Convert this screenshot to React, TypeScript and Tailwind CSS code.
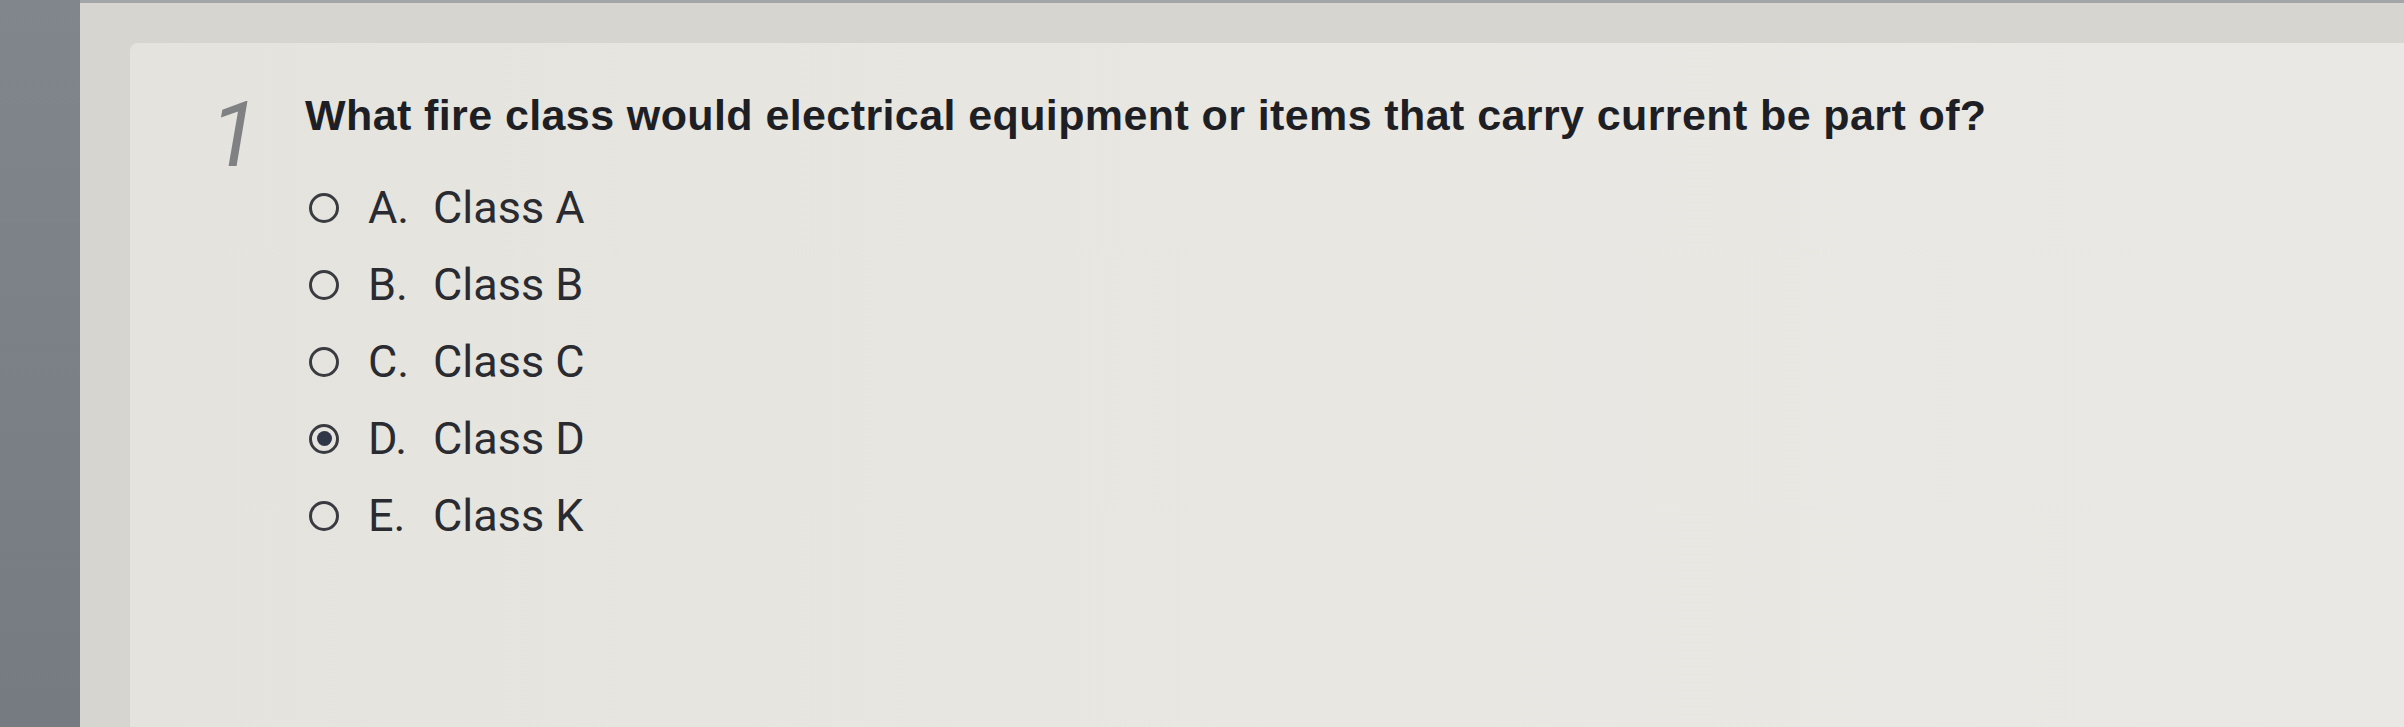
import React from "react";

const options = [
  { key: "A.", text: "Class A", selected: false },
  { key: "B.", text: "Class B", selected: false },
  { key: "C.", text: "Class C", selected: false },
  { key: "D.", text: "Class D", selected: true },
  { key: "E.", text: "Class K", selected: false },
];

function Radio({ selected }: { selected: boolean }) {
  return (
    <span className="flex h-[30px] w-[30px] shrink-0 items-center justify-center rounded-full border-[3px] border-[#3a3b40]">
      {selected && <span className="h-[15px] w-[15px] rounded-full bg-[#2f3648]" />}
    </span>
  );
}

export default function App() {
  return (
    <div
      className="flex h-[727px] w-full overflow-hidden bg-[#7b8186]"
      style={{ fontFamily: "Roboto, 'Liberation Sans', Arial, sans-serif" }}
    >
      <div className="w-[80px] shrink-0 bg-gradient-to-b from-[#80868b] to-[#757b80]" />
      <div className="flex flex-1 flex-col border-t-[3px] border-[#a3a6a8] bg-[#d6d5d0]">
        <div className="flex flex-1 pl-[50px] pt-[40px]">
          <div className="flex-1 rounded-tl-[8px] bg-gradient-to-r from-[#e4e3de] via-[#e8e7e2] to-[#e9e8e4] pl-[80px] pt-[45px]">
            <div className="flex">
              <div className="w-[95px] shrink-0 pt-[3px] text-[90px] font-normal italic leading-[90px] text-[#808183]">
                1
              </div>
              <div className="flex flex-col pt-[6px]">
                <div
                  className="text-[43px] font-bold leading-[42px] tracking-[0.4px] text-[#1e1f25]"
                  style={{ fontFamily: "'Liberation Sans', Arial, sans-serif" }}
                >
                  What fire class would electrical equipment or items that carry current be part of?
                </div>
                <div className="mt-[33px] flex flex-col">
                  {options.map((o) => (
                    <div key={o.key} className="flex h-[77px] items-center pl-[4px]">
                      <Radio selected={o.selected} />
                      <span className="ml-[29px] w-[65px] text-[45px] leading-[77px] text-[#2a2b31]">
                        {o.key}
                      </span>
                      <span className="text-[45px] leading-[77px] text-[#2a2b31]">{o.text}</span>
                    </div>
                  ))}
                </div>
              </div>
            </div>
          </div>
        </div>
      </div>
    </div>
  );
}
